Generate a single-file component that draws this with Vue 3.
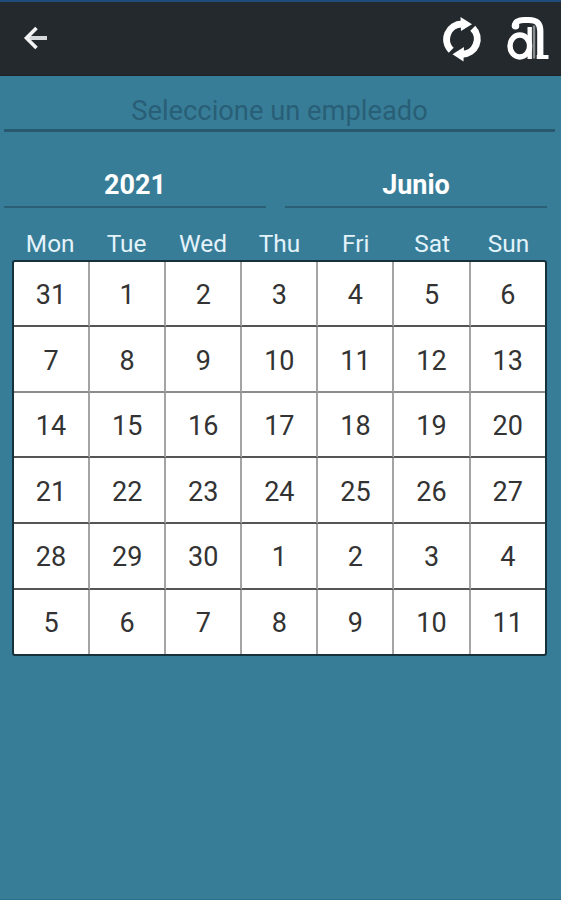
<script setup>
import { ref } from 'vue'

const year = ref('2021')
const month = ref('Junio')

const weekDays = ['Mon', 'Tue', 'Wed', 'Thu', 'Fri', 'Sat', 'Sun']

const weeks = [
  [31, 1, 2, 3, 4, 5, 6],
  [7, 8, 9, 10, 11, 12, 13],
  [14, 15, 16, 17, 18, 19, 20],
  [21, 22, 23, 24, 25, 26, 27],
  [28, 29, 30, 1, 2, 3, 4],
  [5, 6, 7, 8, 9, 10, 11]
]
</script>

<template>
  <div class="screen">
    <header class="toolbar">
      <svg class="back" viewBox="0 0 26 26">
        <path class="shaft" d="M24 13H5" />
        <path class="tip" d="M13.500 3L3.500 13l10 10" />
      </svg>
      <svg class="sync" viewBox="0 0 40 46">
        <path class="arc" d="M8.200 33.200A15.300 15.300 0 0 1 19 7" />
        <path class="arc" d="M29.800 11.200A15.300 15.300 0 0 1 19 37.300" />
        <path class="head" d="M17.500 0L29 7.200L18 14Z" />
        <path class="head" d="M21 30L9.500 37.300L20.500 44.500Z" />
      </svg>
      <svg class="logo" viewBox="0 0 44 46">
        <ellipse class="bowl" cx="12.800" cy="31" rx="9.800" ry="11" />
        <path class="hook" d="M8 11C8 6.500 12 5 17 5H22C30 5 33.300 8.500 33.300 16V43" />
        <circle class="ball" cx="8.500" cy="10.800" r="3.800" />
        <path class="inner" d="M22.700 12V44" />
        <path class="gap" d="M27 10.500V43.500" />
        <path class="foot" d="M29.700 42H41.500" />
      </svg>
    </header>

    <div class="employee">Seleccione un empleado</div>

    <div class="selectors">
      <div class="selector">{{ year }}</div>
      <div class="selector">{{ month }}</div>
    </div>

    <div class="week-days">
      <span v-for="day in weekDays" :key="day">{{ day }}</span>
    </div>

    <div class="calendar">
      <template v-for="(week, i) in weeks" :key="i">
        <div v-for="(day, j) in week" :key="j" class="day" :class="{ light: i === 1 }">{{ day }}</div>
      </template>
    </div>
  </div>
</template>

<style>
body {
  margin: 0;
  background: #387d98;
}
</style>

<style scoped>
.screen {
  box-sizing: border-box;
  height: 900px;
  overflow: hidden;
  background: #387d98;
  border-top: 2px solid #204b7d;
  border-bottom: 1px solid #2c7188;
  font-family: Roboto, sans-serif;
}

.toolbar {
  box-sizing: border-box;
  display: flex;
  align-items: flex-start;
  height: 74px;
  padding: 13px 10px 0 23px;
  background: #23292d;
  border-bottom: 1px solid #1c2427;
}

.back {
  width: 26px;
  height: 26px;
  margin-top: 10px;
  fill: none;
  stroke-width: 3.6;
}

.shaft {
  stroke: #d4d8da;
  stroke-width: 4;
}

.tip {
  stroke: #f4f4f4;
}

.sync {
  width: 40px;
  height: 46px;
  margin: 2px 24px 0 auto;
}

.arc {
  fill: none;
  stroke: #fff;
  stroke-width: 7;
}

.head {
  fill: #fff;
}

.logo {
  width: 44px;
  height: 46px;
  fill: none;
  stroke: #fff;
}

.bowl {
  stroke-width: 5.4;
}

.hook {
  stroke-width: 6.2;
}

.ball {
  fill: #fff;
  stroke: none;
}

.inner {
  stroke-width: 4.4;
}

.gap {
  stroke: #8a8d8f;
  stroke-width: 2.5;
}

.foot {
  stroke-width: 4;
}

.employee {
  box-sizing: border-box;
  height: 56px;
  margin: 0 6px 0 4px;
  padding-top: 19px;
  border-bottom: 3px solid #29596e;
  color: #285f76;
  font-size: 27.3px;
  line-height: 32px;
  text-align: center;
}

.selectors {
  display: grid;
  grid-template-columns: 262px 262px;
  column-gap: 19px;
  margin-left: 4px;
}

.selector {
  box-sizing: border-box;
  height: 76px;
  padding-top: 37px;
  border-bottom: 2px solid #2b5f75;
  color: #fff;
  font-size: 27px;
  font-weight: 700;
  line-height: 32px;
  text-align: center;
}

.week-days {
  display: grid;
  grid-template-columns: repeat(7, 76.4px);
  height: 52px;
  margin-left: 12px;
  color: #e4f3fa;
  font-size: 24.4px;
  font-weight: 450;
  line-height: 71px;
  text-align: center;
}

.calendar {
  box-sizing: border-box;
  display: grid;
  grid-template-columns: repeat(6, 76.1px) 1fr;
  grid-template-rows: 65.3px repeat(4, 65.6px) 64.3px;
  width: 535px;
  height: 396px;
  margin-left: 12px;
  border: 2px solid #173039;
  border-radius: 3px;
  background: #fff;
}

.day {
  display: flex;
  align-items: center;
  justify-content: center;
  padding-top: 3px;
  border-right: 2px solid #a4a4a4;
  border-bottom: 2px solid #555;
  color: #333;
  font-size: 27px;
}

.day.light {
  border-bottom-color: #8c8c8c;
}

.day:nth-child(7n) {
  border-right: none;
}

.day:nth-child(n + 36) {
  border-bottom: none;
}
</style>
